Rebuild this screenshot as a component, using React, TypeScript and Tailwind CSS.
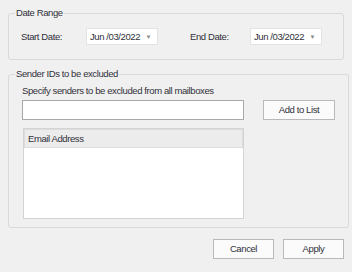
import { useState } from "react";

function DatePick({ value }: { value: string }) {
  return (
    <div className="flex h-[17px] w-[72px] items-center justify-between whitespace-nowrap border border-[#e3e3e3] bg-white pl-[3px] pr-[6px]">
      <span>{value}</span>
      <span className="text-[6px] text-[#8a8a8a]">▼</span>
    </div>
  );
}

function Btn({ label, className }: { label: string; className?: string }) {
  return (
    <button
      className={
        "flex h-[20px] items-center justify-center border border-[#b9b9b9] bg-[#fbfbfb] " +
        (className ?? "")
      }
    >
      {label}
    </button>
  );
}

export default function App() {
  const [sender, setSender] = useState("");

  return (
    <div
      className="flex h-[272px] w-[352px] flex-col bg-[#f0f0f0] px-[8px] pt-[7px] text-[9.5px] leading-[12px] tracking-[-0.4px] text-[#30303a]"
      style={{ fontFamily: '"Liberation Sans", Arial, sans-serif' }}
    >
      <fieldset className="h-[53px] rounded-[3px] border border-[#d9d9d9] px-[12px]">
        <legend className="ml-[-6px] px-[1px]">Date Range</legend>
        <div className="mt-[9px] flex items-center">
          <span className="w-[65px]">Start Date:</span>
          <DatePick value="Jun /03/2022" />
          <span className="ml-[32px] w-[60px]">End Date:</span>
          <DatePick value="Jun /03/2022" />
        </div>
      </fieldset>

      <fieldset className="mt-[8px] h-[160px] rounded-[3px] border border-[#d9d9d9] px-[13px]">
        <legend className="ml-[-7px] px-[1px]">Sender IDs to be excluded</legend>
        <div className="mt-[5px]">Specify senders to be excluded from all mailboxes</div>
        <div className="mt-[3px] flex">
          <div className="flex w-[222px] flex-col">
            <input
              value={sender}
              onChange={(e) => setSender(e.target.value)}
              className="h-[20px] w-full border border-[#a9a9a9] bg-white px-[3px] outline-none"
            />
            <div className="mt-[8px] ml-[1px] flex h-[91px] flex-col border border-[#d4d4d4] bg-white">
              <div className="flex h-[19px] items-center border border-[#dcdcdc] bg-[#ececec] pl-[3px]">
                Email Address
              </div>
            </div>
          </div>
          <Btn label="Add to List" className="ml-[19px] w-[72px]" />
        </div>
      </fieldset>

      <div className="mt-[11px] flex justify-end gap-[9px]">
        <Btn label="Cancel" className="w-[61px]" />
        <Btn label="Apply" className="w-[61px]" />
      </div>
    </div>
  );
}
